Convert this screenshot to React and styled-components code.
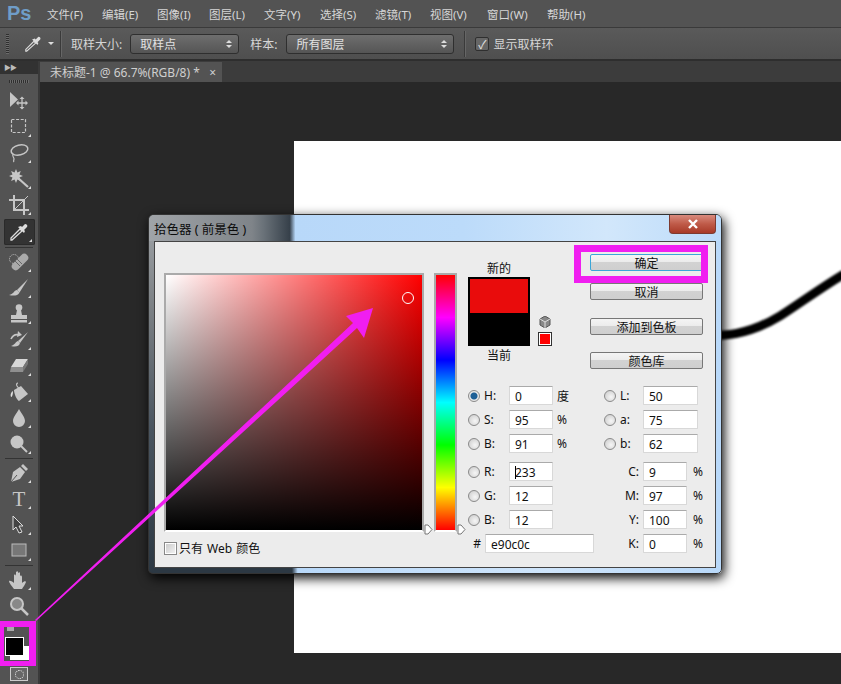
import React from 'react';
import styled, {createGlobalStyle} from 'styled-components';

const GlobalStyle = createGlobalStyle`
  html, body {
    margin: 0;
    padding: 0;
    background: #282828;
  }
  * {
    box-sizing: border-box;
  }
`;

const FONT = '"Noto Sans", "Noto Sans CJK SC", sans-serif';

const Page = styled.div`
  position: relative;
  width: 841px;
  height: 684px;
  overflow: hidden;
  display: flex;
  flex-direction: column;
  font-family: ${FONT};
  font-size: 12px;
`;

const MenuBar = styled.div`
  height: 28px;
  flex: none;
  display: flex;
  align-items: center;
  background: #535353;
  border-bottom: 1px solid #3a3a3a;
  padding-left: 7px;
  color: #d6d6d6;
`;

const Logo = styled.span`
  width: 40px;
  font-family: "Liberation Sans", sans-serif;
  font-size: 20px;
  font-weight: bold;
  color: #6f9dc8;
`;

const MenuItem = styled.span`
  width: ${props => props.w}px;
  white-space: nowrap;
  font-size: 11.5px;
`;

const OptionsBar = styled.div`
  height: 33px;
  flex: none;
  display: flex;
  align-items: center;
  background: linear-gradient(#5a5a5a, #4f4f4f);
  border-bottom: 2px solid #2e2e2e;
  color: #d6d6d6;
  padding-left: 6px;
`;

const Grip = styled.div`
  width: 3px;
  height: 20px;
  background: repeating-linear-gradient(#2f2f2f 0 1px, #6a6a6a 1px 2px);
`;

const OptionIcon = styled.svg`
  width: 18px;
  height: 18px;
  margin-left: 15px;
`;

const Caret = styled.span`
  width: 0;
  height: 0;
  margin-left: 6px;
  border-left: 3px solid transparent;
  border-right: 3px solid transparent;
  border-top: 3px solid #ddd;
`;

const Divider = styled.span`
  width: 1px;
  height: 26px;
  background: #3a3a3a;
  margin-left: ${props => props.ml}px;
  box-shadow: 1px 0 0 #666;
`;

const OptionLabel = styled.span`
  margin-left: ${props => props.ml}px;
  white-space: nowrap;
`;

const Select = styled.div`
  width: ${props => props.w}px;
  height: 20px;
  margin-left: ${props => props.ml}px;
  display: flex;
  align-items: center;
  justify-content: space-between;
  padding: 0 6px 0 9px;
  border: 1px solid #2f2f2f;
  border-radius: 3px;
  background: linear-gradient(#6e6e6e, #555);
  color: #e2e2e2;
`;

const SelectArrows = styled.span`
  display: flex;
  flex-direction: column;
  gap: 2px;

  &::before, &::after {
    content: '';
    border-left: 3px solid transparent;
    border-right: 3px solid transparent;
  }
  &::before {
    border-bottom: 3px solid #ddd;
  }
  &::after {
    border-top: 3px solid #ddd;
  }
`;

const OptionCheck = styled.span`
  width: 14px;
  height: 14px;
  margin-left: 10px;
  display: flex;
  align-items: center;
  justify-content: center;
  border: 1px solid #2f2f2f;
  border-radius: 2px;
  background: #666;
  color: #e0e0e0;
`;

const Workspace = styled.div`
  flex: 1;
  min-height: 0;
  display: flex;
`;

const ToolPanel = styled.div`
  width: 40px;
  flex: none;
  display: flex;
  flex-direction: column;
  background: #535353;
  border-right: 2px solid #3a3a3a;
`;

const PanelHead = styled.div`
  height: 13px;
  flex: none;
  background: #323232;
  color: #bbb;
  font-size: 7px;
  line-height: 13px;
  padding-left: 4px;
  letter-spacing: -1px;
`;

const PanelGrip = styled.div`
  height: 14px;
  flex: none;
  display: flex;
  justify-content: center;
  align-items: center;

  &::before {
    content: '';
    width: 20px;
    height: 3px;
    background: repeating-linear-gradient(90deg, #2f2f2f 0 1px, #6a6a6a 1px 2px);
  }
`;

const Tool = styled.div`
  position: relative;
  height: 26px;
  flex: none;
  display: flex;
  align-items: center;
  justify-content: center;
  padding-right: 1px;
  margin: ${props => props.active ? '1px 3px 0 4px' : '0'};
  border-radius: 2px;
  background: ${props => props.active ? '#333' : 'transparent'};
  box-shadow: ${props => props.active ? 'inset 0 0 0 1px #2a2a2a' : 'none'};

  &::after {
    content: '';
    display: ${props => props.corner ? 'block' : 'none'};
    position: absolute;
    right: ${props => props.active ? '3px' : '7px'};
    bottom: 3px;
    width: 0;
    height: 0;
    border-left: 3px solid transparent;
    border-bottom: 3px solid #ddd;
  }
`;

const ToolIcon = styled.svg`
  width: 20px;
  height: 20px;
  overflow: visible;
`;

const ToolSep = styled.div`
  height: ${props => props.h}px;
  flex: none;
  display: flex;
  align-items: center;
  padding: 0 5px;

  &::before {
    content: '';
    flex: 1;
    height: 1px;
    background: #333;
  }
`;

const ColorWell = styled.div`
  position: relative;
  height: 46px;
  flex: none;
`;

const ColorSquare = styled.span`
  position: absolute;
  left: ${props => props.x}px;
  top: ${props => props.y}px;
  width: ${props => props.w}px;
  height: ${props => props.h}px;
  background: ${props => props.color};
  border: ${props => props.outlined ? '1px solid #fff' : 'none'};
`;

const MaskIcon = styled.div`
  margin: 2px auto 0;
  width: 18px;
  height: 14px;
  border: 1px solid #ccc;
  background: #666;
  display: flex;
  align-items: center;
  justify-content: center;

  &::before {
    content: '';
    width: 7px;
    height: 7px;
    border: 1px dotted #eee;
    border-radius: 50%;
  }
`;

const Main = styled.div`
  flex: 1;
  min-width: 0;
  display: flex;
  flex-direction: column;
`;

const TabRow = styled.div`
  height: 21px;
  flex: none;
  background: #3c3c3c;
  padding-top: 1px;
  display: flex;
`;

const DocTab = styled.div`
  width: 182px;
  display: flex;
  align-items: center;
  justify-content: space-between;
  padding: 0 6px 0 10px;
  background: #535353;
  color: #cfcfcf;
  white-space: nowrap;
`;

const Canvas = styled.div`
  flex: 1;
  background: #282828;
  padding: 59px 0 31px 254px;
  display: flex;
  min-height: 0;
`;

const Doc = styled.div`
  flex: 1;
  background: #fff;
`;

const DocStroke = styled.svg`
  display: block;
  width: 100%;
  height: 100%;
`;

const Dialog = styled.div`
  position: absolute;
  left: 148px;
  top: 214px;
  width: 574px;
  height: 360px;
  display: flex;
  flex-direction: column;
  border-radius: 6px 6px 5px 5px;
  padding: 0 5px 5px;
  border: 1px solid #333;
  background:
    linear-gradient(#a0a4a8, #7d8286 25%, #4a5560 60%, #2c3843) left top / 5px 100% no-repeat,
    linear-gradient(90deg, #2c3843 25%, #b8d8f9 26%, #cfe5fb 70%, #b8d8f9);
  box-shadow: 2px 4px 12px #000;
`;

const TitleBar = styled.div`
  height: 26px;
  flex: none;
  margin: 0 -5px;
  padding-left: 5px;
  display: flex;
  align-items: center;
  justify-content: space-between;
  border-radius: 5px 5px 0 0;
  background: linear-gradient(90deg, #a0a4a8 0, #7f8489 18%, #6a7279 20%, #36404a 24.6%, #b8d8f9 25.6%, #bcdbfa 55%, #d2e7fb 80%, #bcdbfa);
  color: #0c0c0c;
  font-size: 12.5px;
  white-space: pre;
`;

const CloseButton = styled.div`
  width: 47px;
  height: 19px;
  margin-top: -7px;
  margin-right: 5px;
  display: flex;
  align-items: center;
  justify-content: center;
  border: 1px solid #7d3a30;
  border-top: none;
  border-radius: 0 0 4px 4px;
  background: linear-gradient(#d98b7e, #bf5a48 50%, #a83a28);
`;

const CloseGlyph = styled.svg`
  width: 12px;
  height: 10px;
`;

const DialogBody = styled.div`
  flex: 1;
  display: flex;
  background: #ececec;
  border: 1px solid #444;
  padding: 12px 0 0 9px;
  color: #111;
`;

const PickerCol = styled.div`
  width: 293px;
  flex: none;
  margin-top: 19px;
  display: flex;
  flex-direction: column;
`;

const PickerRow = styled.div`
  display: flex;
  gap: 10px;
`;

const SliderWrap = styled.div`
  position: relative;
`;

const ColorField = styled.div`
  width: 260px;
  height: 259px;
  position: relative;
  border: 2px solid #aaa;
  border-bottom: 2px solid #fff;
  background:
    linear-gradient(to top, #000, transparent),
    linear-gradient(to right, #fff, #f00);
`;

const FieldRing = styled.span`
  position: absolute;
  right: 8px;
  top: 17px;
  width: 12px;
  height: 12px;
  border: 1px solid #fff;
  border-radius: 50%;
`;

const HueStrip = styled.div`
  width: 23px;
  height: 259px;
  border: 2px solid #aaa;
  border-bottom: 2px solid #fff;
  background: linear-gradient(#f00, #f0f, #00f, #0ff, #0f0, #ff0, #f00);
`;

const SliderMark = styled.svg`
  position: absolute;
  top: 251px;
  ${props => props.side}: -9px;
  width: 9px;
  height: 11px;
`;

const WebRow = styled.label`
  display: flex;
  align-items: center;
  gap: 2px;
  margin-top: 7px;
  height: 18px;
  white-space: pre;
  word-spacing: 1px;
`;

const CheckBox = styled.span`
  width: 13px;
  height: 13px;
  border: 1px solid #888;
  box-shadow: inset 0 0 0 1px #fff;
  background: linear-gradient(135deg, #c8c8c8, #f4f4f4);
`;

const ControlCol = styled.div`
  width: 240px;
  flex: none;
  margin-left: 11px;
  display: flex;
  flex-direction: column;
`;

const TopControls = styled.div`
  display: flex;
  height: 132px;
`;

const SwatchCol = styled.div`
  width: 62px;
  flex: none;
  display: flex;
  flex-direction: column;
  align-items: center;
  padding-top: 6px;
`;

const SwatchLabel = styled.span`
  height: 17px;
  line-height: 17px;
`;

const Swatch = styled.div`
  width: 62px;
  height: 69px;
  display: flex;
  flex-direction: column;
  border: 2px solid #000;
  border-bottom: none;
  margin-bottom: 1px;
`;

const SwatchPart = styled.div`
  flex: 1;
  background: ${props => props.color};
`;

const GamutCol = styled.div`
  width: 60px;
  flex: none;
  padding: 62px 0 0 8px;
  display: flex;
  flex-direction: column;
  gap: 4px;
`;

const GamutCube = styled.svg`
  width: 12px;
  height: 12px;
  display: block;
  margin-left: 1px;
`;

const GamutSwatch = styled.span`
  width: 14px;
  height: 14px;
  background: #f00;
  border: 1px solid #333;
  box-shadow: inset 0 0 0 1px #fff;
`;

const ButtonCol = styled.div`
  width: 113px;
  flex: none;
  display: flex;
  flex-direction: column;
`;

const DlgButton = styled.div`
  height: 17px;
  margin-top: ${props => props.mt}px;
  display: flex;
  align-items: center;
  justify-content: center;
  border: 1px solid ${props => props.primary ? '#3aa6d8' : '#777'};
  border-radius: 2px;
  background: linear-gradient(#f4f4f4 0, #ececec 45%, #d2d2d2 50%, #cfcfcf);
  font-size: 12px;
`;

const ValueArea = styled.div`
  display: flex;
`;

const ValueCol = styled.div`
  width: ${props => props.w}px;
  flex: none;
  display: flex;
  flex-direction: column;
`;

const ValueRow = styled.div`
  display: flex;
  align-items: center;
  height: 19px;
  margin-bottom: ${props => props.mb}px;
`;

const Radio = styled.span`
  width: 12px;
  height: 12px;
  flex: none;
  border-radius: 50%;
  border: 1px solid #8a8a8a;
  background: ${props => props.on
    ? 'radial-gradient(circle, #1d5f96 0 3px, #e8e8e8 4px)'
    : 'radial-gradient(circle at 60% 60%, #f6f6f6, #c8c8c8)'};
`;

const ValueLabel = styled.span`
  width: ${props => props.w}px;
  flex: none;
  text-align: ${props => props.right ? 'right' : 'left'};
  padding-left: ${props => props.right ? 0 : 4}px;
  padding-right: ${props => props.right ? 4 : 0}px;
`;

const Input = styled.div`
  width: ${props => props.w}px;
  height: 19px;
  flex: none;
  padding: 0 5px;
  line-height: 19px;
  background: #fff;
  border: 1px solid #d8d8d8;
  border-top-color: #aaa;
  border-radius: 1px;
  white-space: nowrap;
`;

const Cursor = styled.span`
  display: inline-block;
  width: 1px;
  height: 13px;
  margin-right: -1px;
  vertical-align: -2px;
  background: #000;
`;

const Unit = styled.span`
  margin-left: ${props => props.ml}px;
`;

const Overlay = styled.svg`
  position: absolute;
  left: 0;
  top: 0;
  width: 841px;
  height: 684px;
  pointer-events: none;
`;

const HighlightBox = styled.div`
  position: absolute;
  left: ${props => props.x}px;
  top: ${props => props.y}px;
  width: ${props => props.w}px;
  height: ${props => props.h}px;
  border-style: solid;
  border-color: #f01ef0;
  border-width: ${props => props.edge};
  pointer-events: none;
`;

const G = '#c6c6c6';

const ICONS = {
  move: <><path d="M1 1v15l8-7.500z" fill={G}/><path d="M13 7v10M8 12h10" stroke={G} strokeWidth="1.3"/><path d="M13 5.500l-2.500 2.500h5zM13 18.500l-2.500-2.500h5zM7 12l2.500-2.500v5zM19 12l-2.500-2.500v5z" fill={G}/></>,
  marquee: <rect x="2.500" y="2.500" width="14" height="13" fill="none" stroke={G} strokeWidth="1.2" strokeDasharray="3 1.600"/>,
  lasso: <><ellipse cx="10.500" cy="7" rx="8.500" ry="5" fill="none" stroke={G} strokeWidth="1.500" transform="rotate(-14 10.500 7)"/><path d="M4 11c-1 3 1 3 1 5 0 1-1 2 0 3" fill="none" stroke={G} strokeWidth="1.200"/></>,
  wand: <><path d="M7 0l1.400 3.400 3.400-1.400-1.400 3.400L14 7l-3.600 1.500 1.400 3.400-3.400-1.400L7 14l-1.500-3.500-3.400 1.400 1.400-3.400L0 7l3.500-1.600L2.100 2l3.400 1.400z" fill={G}/><path d="M9 9l10 9" stroke={G} strokeWidth="2.200"/></>,
  crop: <><path d="M5 0v15h15M0 5h15v15" fill="none" stroke={G} strokeWidth="2"/><path d="M5 15L15 5M15 5l4-4" stroke={G} strokeWidth="1"/></>,
  dropper: <><path d="M3 18l-1 0 0-2 9-9 2 2z" fill="none" stroke="#ddd" strokeWidth="1.300"/><path d="M9 5l6 6 1-2-1-1 3-3c1-1 0-3-2-3l-3 3-1-1z" fill="#ddd"/></>,
  heal: <><circle cx="5" cy="7" r="4.500" fill="none" stroke={G} strokeWidth="1" strokeDasharray="1 1"/><rect x="1" y="6" width="20" height="8" rx="4" fill="#aaa" transform="rotate(-45 11 10)"/><path d="M8 7l5 5M6 9l5 5" stroke="#666"/></>,
  brush: <><path d="M19 1L8 12l2.500 2.500z" fill={G}/><path d="M8 12c-3 0-3 4-8 5 4 1 9 1 10.500-2.500z" fill={G}/></>,
  stamp: <><circle cx="10" cy="3.500" r="3.300" fill={G}/><path d="M8 6h4l1 5h5v4H2v-4h5z" fill={G}/><rect x="2" y="16" width="16" height="2.500" fill={G}/></>,
  history: <><path d="M19 2L9 11l2 2z" fill={G}/><path d="M9 11c-2 0-3 4-7 5 4 1 8 1 9-3z" fill={G}/><path d="M2 9c2-4 5-5 8-4" fill="none" stroke={G} strokeWidth="1.600"/><path d="M9 1l4 4-5 2z" fill={G}/></>,
  eraser: <><path d="M7 3h12l-5 8H2z" fill="#d8d8d8"/><path d="M2 11h12v5H1z" fill="#8f8f8f"/><path d="M14 11l5-8v5l-5 8z" fill="#777"/></>,
  bucket: <><path d="M5 8l7-4 7 8-9 7c-2-1-5-7-5-11z" fill={G}/><path d="M9 1c-1 0-2 1-1 3l3 4" fill="none" stroke={G} strokeWidth="1.200"/><path d="M4 9c-2 1-3 4-2 6 1 0 2-2 2-6z" fill="#e0e0e0"/></>,
  drop: <path d="M10 1c2 4 6 8 6 12a6 6 0 0 1-12 0c0-4 4-8 6-12z" fill={G}/>,
  dodge: <><circle cx="8" cy="8" r="6.500" fill={G}/><path d="M12 12l6 6" stroke={G} strokeWidth="2"/></>,
  pen: <><path d="M2 19l2-10 7-5 5 5-5 7z" fill={G}/><path d="M2 19l6-7" stroke="#555"/><path d="M12 3l2-2 5 5-2 2z" fill={G}/></>,
  type: <text x="10" y="17" textAnchor="middle" fontFamily="Liberation Serif, serif" fontSize="21" fill={G}>T</text>,
  path: <><path d="M4 1v14l3-3 3 6 3-1-3-6h4z" fill="#444" stroke="#ddd"/></>,
  shape: <rect x="3" y="3" width="14" height="12" fill="#777" stroke="#bbb"/>,
  hand: <path d="M5 19c-2-3-5-6-5-8 1-1 4 1 5 2V5c1-1 2 0 2 1V2c1-1 2-1 2 0v1c1-1 2-1 2 0v3c1-1 2 0 2 1v6c2-2 4-2 4-1-1 3-3 5-4 7z" fill={G}/>,
  zoom: <><circle cx="8" cy="8" r="6" fill="#888" stroke={G} strokeWidth="2"/><path d="M12 12l7 7" stroke={G} strokeWidth="2.500"/></>,
};

const TOOLS = [
  {icon: 'move'},
  {icon: 'marquee', corner: true},
  {icon: 'lasso', corner: true},
  {icon: 'wand', corner: true},
  {icon: 'crop', corner: true},
  {icon: 'dropper', corner: true, active: true},
  {sep: 4},
  {icon: 'heal', corner: true},
  {icon: 'brush', corner: true},
  {icon: 'stamp', corner: true},
  {icon: 'history', corner: true},
  {icon: 'eraser', corner: true},
  {icon: 'bucket', corner: true},
  {icon: 'drop', corner: true},
  {icon: 'dodge', corner: true},
  {sep: 3},
  {icon: 'pen', corner: true},
  {icon: 'type', corner: true},
  {icon: 'path', corner: true},
  {icon: 'shape', corner: true},
  {sep: 3},
  {icon: 'hand', corner: true},
  {icon: 'zoom'},
];

const MENUS = [
  ['文件(F)', 55], ['编辑(E)', 55], ['图像(I)', 52], ['图层(L)', 55], ['文字(Y)', 56],
  ['选择(S)', 55], ['滤镜(T)', 55], ['视图(V)', 57], ['窗口(W)', 60], ['帮助(H)', 50],
];

const HSB = [
  {k: 'H:', v: '0', unit: '度', on: true},
  {k: 'S:', v: '95', unit: '%'},
  {k: 'B:', v: '91', unit: '%'},
];
const RGB = [
  {k: 'R:', v: '233', cursor: true},
  {k: 'G:', v: '12'},
  {k: 'B:', v: '12'},
];
const LAB = [
  {k: 'L:', v: '50'},
  {k: 'a:', v: '75'},
  {k: 'b:', v: '62'},
];
const CMYK = [
  {k: 'C:', v: '9'},
  {k: 'M:', v: '97'},
  {k: 'Y:', v: '100'},
  {k: 'K:', v: '0'},
];

const Mark = ({side}) => (
  <SliderMark side={side} viewBox="0 0 9 11">
    <path
      d={side === 'right' ? 'M1 1h3l4 4.500-4 4.500H1z' : 'M8 1H5L1 5.500 5 10h3z'}
      fill="#fff"
      stroke="#777"
    />
  </SliderMark>
);

const App = () => {
  return (
    <Page>
      <GlobalStyle/>
      <MenuBar>
        <Logo>Ps</Logo>
        {MENUS.map(([label, w]) => <MenuItem key={label} w={w}>{label}</MenuItem>)}
      </MenuBar>
      <OptionsBar>
        <Grip/>
        <OptionIcon viewBox="0 0 20 20">{ICONS.dropper}</OptionIcon>
        <Caret/>
        <Divider ml={6}/>
        <OptionLabel ml={10}>取样大小:</OptionLabel>
        <Select w={109} ml={8}>取样点<SelectArrows/></Select>
        <OptionLabel ml={11}>样本:</OptionLabel>
        <Select w={168} ml={9}>所有图层<SelectArrows/></Select>
        <Divider ml={10}/>
        <OptionCheck>✓</OptionCheck>
        <OptionLabel ml={4}>显示取样环</OptionLabel>
      </OptionsBar>
      <Workspace>
        <ToolPanel>
          <PanelHead>▶▶</PanelHead>
          <PanelGrip/>
          {TOOLS.map((tool, i) => tool.sep
            ? <ToolSep key={i} h={tool.sep}/>
            : (
              <Tool key={tool.icon} corner={tool.corner} active={tool.active}>
                <ToolIcon viewBox="0 0 20 20">{ICONS[tool.icon]}</ToolIcon>
              </Tool>
            ))}
          <ColorWell>
            <ColorSquare x={7} y={8} w={7} h={4} color="#aaa"/>
            <ColorSquare x={10} y={27} w={19} h={14} color="#fff"/>
            <ColorSquare x={5} y={18} w={19} h={19} color="#000" outlined/>
          </ColorWell>
          <MaskIcon/>
        </ToolPanel>
        <Main>
          <TabRow>
            <DocTab>未标题-1 @ 66.7%(RGB/8) * <span>×</span></DocTab>
          </TabRow>
          <Canvas>
            <Doc>
              <DocStroke viewBox="0 0 547 512" preserveAspectRatio="none">
                <path
                  d="M400 194C430 196 455 194 486 175C505 163 525 148 550 133"
                  fill="none"
                  stroke="#000"
                  strokeWidth="9"
                  style={{filter: 'blur(1px)'}}
                />
              </DocStroke>
            </Doc>
          </Canvas>
        </Main>
      </Workspace>

      <Dialog>
        <TitleBar>
          拾色器 ( 前景色 )
          <CloseButton>
            <CloseGlyph viewBox="0 0 12 10">
              <path d="M2 1l8 8M10 1L2 9" stroke="#fff" strokeWidth="2.400"/>
            </CloseGlyph>
          </CloseButton>
        </TitleBar>
        <DialogBody>
          <PickerCol>
            <PickerRow>
              <SliderWrap>
                <ColorField><FieldRing/></ColorField>
                <Mark side="right"/>
              </SliderWrap>
              <SliderWrap>
                <HueStrip/>
                <Mark side="right"/>
              </SliderWrap>
            </PickerRow>
            <WebRow><CheckBox/>只有 Web 颜色</WebRow>
          </PickerCol>
          <ControlCol>
            <TopControls>
              <SwatchCol>
                <SwatchLabel>新的</SwatchLabel>
                <Swatch>
                  <SwatchPart color="#e90c0c"/>
                  <SwatchPart color="#000"/>
                </Swatch>
                <SwatchLabel>当前</SwatchLabel>
              </SwatchCol>
              <GamutCol>
                <GamutCube viewBox="0 0 12 12">
                  <path d="M6 0l5 3v6l-5 3-5-3V3z" fill="#888" stroke="#555"/>
                  <path d="M1 3l5 3 5-3M6 6v6" fill="none" stroke="#ddd"/>
                </GamutCube>
                <GamutSwatch/>
              </GamutCol>
              <ButtonCol>
                <DlgButton primary mt={0}>确定</DlgButton>
                <DlgButton mt={12}>取消</DlgButton>
                <DlgButton mt={18}>添加到色板</DlgButton>
                <DlgButton mt={17}>颜色库</DlgButton>
              </ButtonCol>
            </TopControls>
            <ValueArea>
              <ValueCol w={136}>
                {HSB.map((row, i) => (
                  <ValueRow key={row.k} mb={i === 2 ? 9 : 5}>
                    <Radio on={row.on}/>
                    <ValueLabel w={29}>{row.k}</ValueLabel>
                    <Input w={44}>{row.v}</Input>
                    <Unit ml={4}>{row.unit}</Unit>
                  </ValueRow>
                ))}
                {RGB.map(row => (
                  <ValueRow key={row.k} mb={5}>
                    <Radio/>
                    <ValueLabel w={29}>{row.k}</ValueLabel>
                    <Input w={44}>{row.cursor && <Cursor/>}{row.v}</Input>
                  </ValueRow>
                ))}
                <ValueRow mb={0}>
                  <ValueLabel w={17} right>#</ValueLabel>
                  <Input w={109}>e90c0c</Input>
                </ValueRow>
              </ValueCol>
              <ValueCol w={104}>
                {LAB.map((row, i) => (
                  <ValueRow key={row.k} mb={i === 2 ? 9 : 5}>
                    <Radio/>
                    <ValueLabel w={27}>{row.k}</ValueLabel>
                    <Input w={55}>{row.v}</Input>
                  </ValueRow>
                ))}
                {CMYK.map(row => (
                  <ValueRow key={row.k} mb={5}>
                    <ValueLabel w={39} right>{row.k}</ValueLabel>
                    <Input w={44}>{row.v}</Input>
                    <Unit ml={6}>%</Unit>
                  </ValueRow>
                ))}
              </ValueCol>
            </ValueArea>
          </ControlCol>
        </DialogBody>
      </Dialog>

      <Overlay viewBox="0 0 841 684">
        <polygon
          points="373,308 346,316 353,323 35,620 36,621 357,328 364,338"
          fill="#f01ef0"
        />
      </Overlay>
      <HighlightBox x={574} y={245} w={134} h={38} edge="7px"/>
      <HighlightBox x={0} y={621} w={36} h={45} edge="6px 7px 5px 4px"/>
    </Page>
  );
};

export default App;
